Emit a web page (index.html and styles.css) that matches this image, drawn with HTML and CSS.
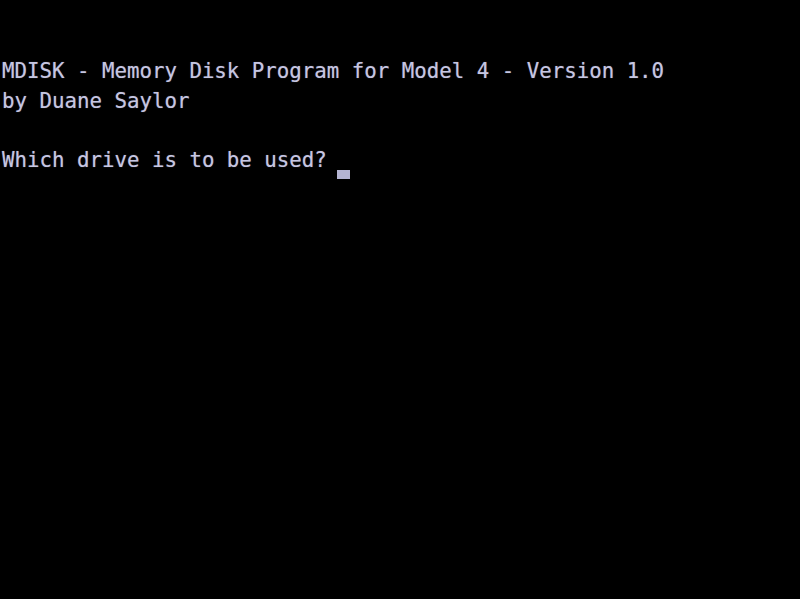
FILE: index.html
```html
<!DOCTYPE html>
<html>
<head>
<meta charset="utf-8">
<link rel="stylesheet" href="styles.css">
</head>
<body>
<main class="screen">
<div class="line">MDISK - Memory Disk Program for Model 4 - Version 1.0</div>
<div class="line">by Duane Saylor</div>
<div class="line"> </div>
<div class="line">Which drive is to be used? <span class="cursor"></span></div>
</main>
</body>
</html>
```
FILE: styles.css
```css
html, body {
  margin: 0;
  padding: 0;
  background: #000;
  width: 800px;
  height: 599px;
  overflow: hidden;
}
.screen {
  padding: 57px 0 0 2px;
  font-family: "DejaVu Sans Mono", monospace;
  font-size: 20.76px;
  line-height: 29.8px;
  color: #c6c6e2;
  text-shadow: 0 0 1px rgba(198, 198, 226, 0.5);
}
.line {
  white-space: pre;
  height: 29.8px;
}
.cursor {
  display: inline-block;
  width: 13px;
  height: 9px;
  margin-left: -2px;
  background: #b4b4d2;
  vertical-align: -12px;
}
```
